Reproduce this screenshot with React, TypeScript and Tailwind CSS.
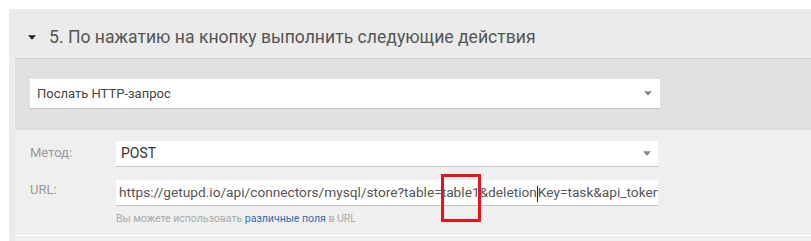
const font = { fontFamily: '"Roboto", "Liberation Sans", sans-serif' };

function Caret({ className }: { className?: string }) {
  return (
    <svg width="9" height="5" viewBox="0 0 9 5" className={className}>
      <path d="M0 0h9L4.5 5z" fill="currentColor" />
    </svg>
  );
}

export default function App() {
  return (
    <div className="h-[241px] bg-white pt-[9px] pl-[9px] overflow-hidden" style={font}>
      <div className="bg-[#ebebeb] pl-[6px]">
        {/* header */}
        <div className="h-[50px] flex items-center border-b border-[#cdcdcd] text-[#555] pl-[13px] pt-[7px]">
          <Caret className="text-[#222] w-[8px] mr-[13px]" />
          <span className="text-[17.6px]">5. По нажатию на кнопку выполнить следующие действия</span>
        </div>

        {/* action select */}
        <div className="bg-[#e0e0e0] pt-[20px] pb-[21px] pl-[15px]">
          <div className="w-[630px] h-[30px] bg-white border-b border-[#c4c4c4] flex items-center justify-between pl-[7px] pr-[8px]">
            <span className="text-[13px] text-[#444]">Послать HTTP-запрос</span>
            <Caret className="text-[#888] w-[8px]" />
          </div>
        </div>

        {/* params */}
        <div className="bg-[#efefef] pt-[11px] pb-[8px] pl-[15px]">
          <div className="flex items-center h-[26px]">
            <div className="w-[86px] text-[13px] text-[#999] pb-[2px]">Метод:</div>
            <div className="w-[542px] h-[26px] bg-white border-b border-[#c4c4c4] flex items-center justify-between pl-[5px] pr-[7px]">
              <span className="text-[14px] text-[#333]">POST</span>
              <Caret className="text-[#888] w-[8px]" />
            </div>
          </div>
          <div className="flex mt-[13px]">
            <div className="w-[86px] text-[13px] text-[#999]">URL:</div>
            <div className="w-[542px]">
              <div className="h-[26px] bg-white border-b border-[#c4c4c4] flex items-center pl-[3px] overflow-hidden whitespace-nowrap">
                <span className="text-[13.7px] text-[#555]">
                  https://getupd.io/api/connectors/mysql/store?table=table1&amp;deletion
                  <span className="inline-block w-px h-[16px] bg-[#222] align-middle" />
                  Key=task&amp;api_token
                </span>
              </div>
              <div className="text-[10.5px] text-[#aaa] mt-[5px]">
                Вы можете использовать <span className="text-[#2f6db5]">различные поля</span> в URL
              </div>
            </div>
          </div>
        </div>
        <div className="h-px bg-white" />
        <div className="h-[10px] bg-[#efefef]" />
      </div>

      {/* annotation box */}
      <div className="absolute left-[441px] top-[174px] w-[40px] h-[48px] border-[3px] border-[#e8141b]" />
    </div>
  );
}
